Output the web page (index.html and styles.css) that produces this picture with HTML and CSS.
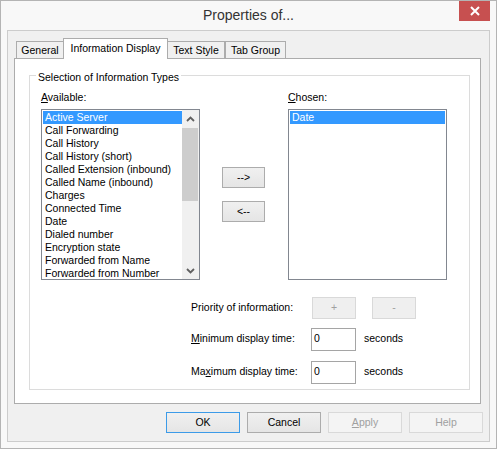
FILE: index.html
```html
<!DOCTYPE html>
<html>
<head>
<meta charset="utf-8">
<link rel="stylesheet" href="styles.css">
</head>
<body>
<div class="window">
  <div class="titlebar">
    <div></div>
    <div class="title">Properties of...</div>
    <div class="close"><svg width="10" height="10" viewBox="0 0 10 10"><path d="M1 1 L9 9 M9 1 L1 9" stroke="#fff" stroke-width="2" fill="none"/></svg></div>
  </div>
  <div class="frame">
    <div class="tabs">
      <div class="tab t-general">General</div>
      <div class="tab active t-info">Information Display</div>
      <div class="tab t-text">Text Style</div>
      <div class="tab t-group">Tab Group</div>
    </div>
    <div class="panel">
      <fieldset class="group">
        <legend>Selection of Information Types</legend>
        <div class="group-body">
          <div class="lists">
            <div class="lbl lbl-avail"><u>A</u>vailable:</div>
            <div class="lbl lbl-chosen"><u>C</u>hosen:</div>
            <div class="listbox avail">
              <div class="items">
                <div class="item sel">Active Server</div>
                <div class="item">Call Forwarding</div>
                <div class="item">Call History</div>
                <div class="item">Call History (short)</div>
                <div class="item">Called Extension (inbound)</div>
                <div class="item">Called Name (inbound)</div>
                <div class="item">Charges</div>
                <div class="item">Connected Time</div>
                <div class="item">Date</div>
                <div class="item">Dialed number</div>
                <div class="item">Encryption state</div>
                <div class="item">Forwarded from Name</div>
                <div class="item">Forwarded from Number</div>
              </div>
              <div class="scrollbar">
                <div class="sb-btn"><svg width="9" height="6" viewBox="0 0 9 6"><path d="M1 5 L4.5 1.5 L8 5" stroke="#606060" stroke-width="1.8" fill="none"/></svg></div>
                <div class="sb-thumb"></div>
                <div class="sb-space"></div>
                <div class="sb-btn"><svg width="9" height="6" viewBox="0 0 9 6"><path d="M1 1 L4.5 4.5 L8 1" stroke="#606060" stroke-width="1.8" fill="none"/></svg></div>
              </div>
            </div>
            <div class="movers">
              <div class="btn mover">--&gt;</div>
              <div class="btn mover">&lt;--</div>
            </div>
            <div class="listbox chosen">
              <div class="items full">
                <div class="item sel">Date</div>
              </div>
            </div>
          </div>
          <div class="options">
            <div class="opt-row prio">
              <div class="opt-label">Priority of information:</div>
              <div class="btn small disabled plus">+</div>
              <div class="btn small disabled minus">-</div>
            </div>
            <div class="opt-row field">
              <div class="opt-label"><u>M</u>inimum display time:</div>
              <div class="input"><span>0</span></div>
              <div class="unit">seconds</div>
            </div>
            <div class="opt-row field last">
              <div class="opt-label">Ma<u>x</u>imum display time:</div>
              <div class="input"><span>0</span></div>
              <div class="unit">seconds</div>
            </div>
          </div>
        </div>
      </fieldset>
    </div>
    <div class="actions">
      <div class="btn action default">OK</div>
      <div class="btn action">Cancel</div>
      <div class="btn action disabled"><u>A</u>pply</div>
      <div class="btn action disabled">Help</div>
    </div>
  </div>
</div>
</body>
</html>
```

FILE: styles.css
```css
* { box-sizing: border-box; }
html, body { margin: 0; padding: 0; background: #fff; }
body {
  font-family: "Liberation Sans", Arial, sans-serif;
  font-size: 10.5px;
  color: #000;
}
u { text-decoration: underline; text-underline-offset: 1px; }

.window {
  width: 497px;
  height: 449px;
  border: 1px solid #b4b4b4;
  background: #f8f8f8;
  display: flex;
  flex-direction: column;
}

.titlebar {
  height: 29px;
  display: grid;
  grid-template-columns: 1fr auto 1fr;
}
.title {
  font-size: 14px;
  line-height: 28px;
  color: #333;
  white-space: nowrap;
}
.close {
  justify-self: end;
  align-self: start;
  width: 31px;
  height: 20px;
  margin-right: 6px;
  background: #c75050;
  display: flex;
  align-items: center;
  justify-content: center;
}

.frame {
  flex: 1;
  margin: 0 6px 6px 6px;
  border: 1px solid #cccccc;
  background: #f0f0f0;
  display: flex;
  flex-direction: column;
  padding: 7px 6px 8px 6px;
}

.tabs {
  display: flex;
  align-items: flex-end;
  padding-left: 2px;
  height: 20px;
}
.tab {
  height: 17px;
  border: 1px solid #acacac;
  border-bottom: none;
  background: #f0f0f0;
  line-height: 13px;
  padding-top: 2px;
  text-align: center;
  white-space: nowrap;
}
.t-general { width: 48px; }
.t-info { width: 105px; margin-left: -1px; }
.t-text { width: 58px; margin-left: -1px; }
.t-group { width: 61px; }
.tab.active {
  height: 21px;
  margin-bottom: -1px;
  padding-top: 3px;
  background: #fff;
  position: relative;
  z-index: 1;
}

.panel {
  flex: 1;
  margin-right: 2px;
  border: 1px solid #acacac;
  background: #fff;
  display: flex;
  flex-direction: column;
}

.group {
  margin: 7px 10px 0 14px;
  padding: 0;
  border: 1px solid #dcdcdc;
  min-width: 0;
}
.group legend {
  margin-left: 6px;
  padding: 5px 2px 0 2px;
  line-height: 13px;
}
.group-body {
  padding: 7px 0 5px 11px;
}

.lists {
  display: grid;
  grid-template-columns: 159px 22px 43px 23px 159px;
  grid-template-rows: 13px 171px;
  row-gap: 5px;
}
.lbl { line-height: 13px; white-space: nowrap; }
.lbl-avail { grid-column: 1; grid-row: 1; }
.lbl-chosen { grid-column: 5; grid-row: 1; }
.listbox {
  border: 1px solid #828790;
  background: #fff;
  display: flex;
  overflow: hidden;
  grid-row: 2;
}
.listbox.avail { grid-column: 1; }
.listbox.chosen { grid-column: 5; }
.items {
  flex: 1;
  padding: 1px 0 1px 1px;
  overflow: hidden;
}
.items.full { padding: 1px; }
.item {
  line-height: 13px;
  height: 13px;
  padding-left: 2px;
  white-space: nowrap;
}
.item.sel { background: #3399ff; color: #fff; }

.scrollbar {
  width: 17px;
  background: #f0f0f0;
  display: flex;
  flex-direction: column;
}
.sb-btn {
  height: 17px;
  display: flex;
  align-items: center;
  justify-content: center;
}
.sb-thumb {
  height: 73px;
  margin: 1px 1px 0 0;
  background: #cdcdcd;
}
.sb-space { flex: 1; }

.movers {
  grid-column: 3;
  grid-row: 2;
  display: flex;
  flex-direction: column;
  gap: 13px;
  padding-top: 58px;
}

.btn {
  border: 1px solid #acacac;
  background: linear-gradient(#f0f0f0, #e5e5e5);
  text-align: center;
  white-space: nowrap;
}
.mover {
  height: 21px;
  line-height: 19px;
}
.btn.disabled {
  background: #f4f4f4;
  border-color: #d9d9d9;
  color: #a0a0a0;
}

.options {
  margin: 17px 0 0 150px;
  display: flex;
  flex-direction: column;
}
.opt-row {
  display: flex;
  align-items: center;
}
.opt-row.prio { height: 22px; margin-bottom: 9px; }
.opt-row.field { height: 23px; margin-bottom: 10px; }
.opt-row.last { margin-bottom: 0; }
.opt-label {
  width: 120px;
  line-height: 13px;
  padding-bottom: 2px;
  white-space: nowrap;
}
.btn.small {
  width: 44px;
  height: 22px;
  line-height: 19px;
  background: #efefef;
  border-color: #d9d9d9;
}
.plus { margin-left: 1px; }
.minus { margin-left: 16px; }
.input {
  width: 45px;
  height: 23px;
  border: 1px solid #a5a5a5;
  background: #fff;
  display: flex;
  align-items: center;
  padding-left: 2px;
}
.input span { line-height: 13px; padding-bottom: 2px; }
.unit {
  margin-left: 8px;
  line-height: 13px;
  padding-bottom: 2px;
}

.actions {
  margin-top: 8px;
  display: flex;
  justify-content: flex-end;
  gap: 7px;
}
.btn.action {
  width: 74px;
  height: 21px;
  line-height: 19px;
}
.btn.default { border-color: #3c9be8; }
```
